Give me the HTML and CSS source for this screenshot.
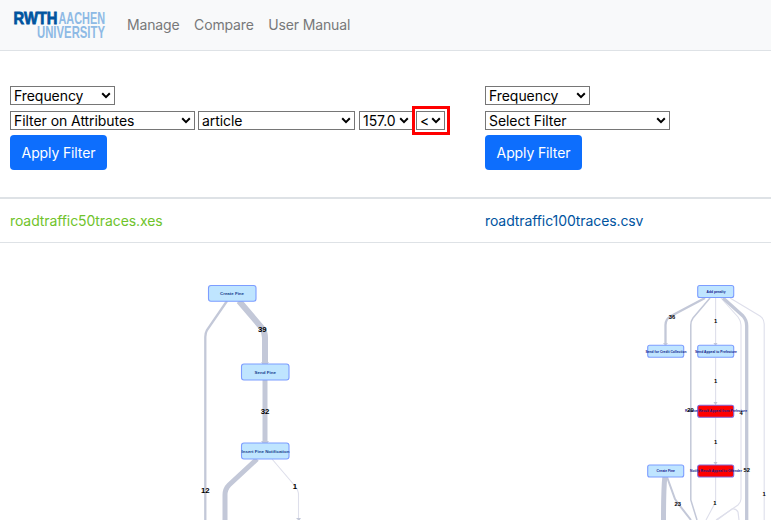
FILE: index.html
```html
<!DOCTYPE html>
<html lang="en">
<head>
<meta charset="utf-8">
<title>Compare</title>
<link rel="stylesheet" href="styles.css">
</head>
<body>
<nav class="navbar">
  <svg class="logo" width="101" height="36" viewBox="-4 -4 101 36" role="img" aria-label="RWTH Aachen University">
    <text class="logo-main" x="0.500" y="12" textLength="44" lengthAdjust="spacingAndGlyphs">RWTH</text>
    <text class="logo-sub" x="45.500" y="12" textLength="46.500" lengthAdjust="spacingAndGlyphs">AACHEN</text>
    <text class="logo-sub" x="24" y="26" textLength="68" lengthAdjust="spacingAndGlyphs">UNIVERSITY</text>
  </svg>
  <a class="nav-link">Manage</a>
  <a class="nav-link">Compare</a>
  <a class="nav-link">User Manual</a>
</nav>
<main class="board">
  <section class="cell filters">
    <div class="row"><span class="select w-frequency"><select><option>Frequency</option></select><svg viewBox="0 0 10 7"><path d="M1.2 1.3 5 5.1 8.8 1.3"/></svg></span></div>
    <div class="row">
      <span class="select w-filter"><select><option>Filter on Attributes</option></select><svg viewBox="0 0 10 7"><path d="M1.2 1.3 5 5.1 8.8 1.3"/></svg></span>
      <span class="select w-attribute"><select><option>article</option></select><svg viewBox="0 0 10 7"><path d="M1.2 1.3 5 5.1 8.8 1.3"/></svg></span>
      <span class="select w-value"><select><option>157.0</option></select><svg viewBox="0 0 10 7"><path d="M1.2 1.3 5 5.1 8.8 1.3"/></svg></span>
      <span class="select w-operator marked"><select><option>&lt;</option></select><svg viewBox="0 0 10 7"><path d="M1.2 1.3 5 5.1 8.8 1.3"/></svg></span>
    </div>
    <button class="apply">Apply Filter</button>
  </section>
  <section class="cell filters">
    <div class="row"><span class="select w-frequency"><select><option>Frequency</option></select><svg viewBox="0 0 10 7"><path d="M1.2 1.3 5 5.1 8.8 1.3"/></svg></span></div>
    <div class="row"><span class="select w-filter"><select><option>Select Filter</option></select><svg viewBox="0 0 10 7"><path d="M1.2 1.3 5 5.1 8.8 1.3"/></svg></span></div>
    <button class="apply">Apply Filter</button>
  </section>
  <div class="cell file file-first">roadtraffic50traces.xes</div>
  <div class="cell file file-second">roadtraffic100traces.csv</div>
  <svg class="graph" width="475" height="277" viewBox="0 243 475 277">
    <g class="edges">
      <path stroke-width="2.3" d="M227 301 207 330Q205.300 333 205.300 337V520"/>
      <path stroke-width="6" d="M239 301 262 328Q265 332 265 338V364"/>
      <path stroke-width="5" d="M265 380V444"/>
      <path stroke-width="5" d="M257 459 229 485Q225 489 225 495V520"/>
      <path class="light" stroke-width="1.1" d="M272 459 295 486Q298.500 490 298.500 495V520"/>
    </g>
    <path class="tip" d="M261 362h8l-4 5zM261 441h8l-4 5zM296 518h5l-2 3z"/>
    <g class="nodes">
      <rect x="208.500" y="285.500" width="47.500" height="15.800" rx="2.500"/>
      <rect x="241.500" y="364" width="47.500" height="16" rx="2.500"/>
      <rect x="241.500" y="443" width="47.500" height="16" rx="2.500"/>
    </g>
    <g class="names">
      <text x="220" y="295.400" textLength="24" lengthAdjust="spacingAndGlyphs">Create Fine</text>
      <text x="254.500" y="373.900" textLength="21.500" lengthAdjust="spacingAndGlyphs">Send Fine</text>
      <text x="241.500" y="452.900" textLength="48" lengthAdjust="spacingAndGlyphs">Insert Fine Notification</text>
    </g>
    <g class="counts">
      <text x="262.300" y="331.800">39</text>
      <text x="265" y="413.600">32</text>
      <text x="205.300" y="493">12</text>
      <text x="295" y="489.300">1</text>
    </g>
  </svg>
  <svg class="graph" width="296" height="277" viewBox="475 243 296 277">
    <g class="edges">
      <path stroke-width="2.300" d="M705 298 671 316Q665.500 319 665.500 325V344"/>
      <path stroke-width="1.500" d="M710 298 693 318Q690.800 321 690.800 325V500L697 520"/>
      <path class="light" stroke-width="1.100" d="M715.600 298V345M715.600 358V405M715.600 417V465M715.600 477V502L706 520"/>
      <path class="light" stroke-width="1.100" d="M721 298 738 317Q741 321 741 325V499Q741 502 738 505L716 520"/>
      <path stroke-width="3.300" d="M723 298 743 316Q746.700 320 746.700 326V520"/>
      <path class="light" stroke-width="1.100" d="M730 298 760 316Q764.200 319 764.200 324V520"/>
      <path stroke-width="5" d="M664.800 477Q663.500 490 663.500 520"/>
      <path stroke-width="2" d="M667 477 675 499Q679 505 691 520"/>
      <path class="light" stroke-width="1.200" d="M717 520 732 509Q736 508 738 512L739 520"/>
    </g>
    <path class="tip" d="M663 343h5l-2.500 3zM713.500 343h4l-2 3zM713.500 402h4l-2 3zM713.500 462h4l-2 3z"/>
    <g class="nodes small">
      <rect x="697.700" y="285.500" width="36" height="12" rx="2"/>
      <rect x="647.700" y="345.300" width="36" height="12" rx="2"/>
      <rect x="697.700" y="345.300" width="36" height="12" rx="2"/>
      <rect class="alert" x="697.700" y="405.200" width="36" height="12" rx="2"/>
      <rect x="647.700" y="465" width="36" height="12" rx="2"/>
      <rect class="alert" x="697.700" y="465" width="36" height="12" rx="2"/>
    </g>
    <g class="names small">
      <text x="706.500" y="292.700" textLength="19" lengthAdjust="spacingAndGlyphs">Add penalty</text>
      <text x="645.500" y="352.700" textLength="41" lengthAdjust="spacingAndGlyphs">Send for Credit Collection</text>
      <text x="695" y="352.700" textLength="42" lengthAdjust="spacingAndGlyphs">Send Appeal to Prefecture</text>
      <text x="685" y="412.200" textLength="62" lengthAdjust="spacingAndGlyphs">Receive Result Appeal from Prefecture</text>
      <text x="656.500" y="472.300" textLength="18.500" lengthAdjust="spacingAndGlyphs">Create Fine</text>
      <text x="690" y="472.300" textLength="52" lengthAdjust="spacingAndGlyphs">Notify Result Appeal to Offender</text>
    </g>
    <g class="counts small">
      <text x="672" y="319.300">36</text>
      <text x="715.600" y="322.900">1</text>
      <text x="715.600" y="383">1</text>
      <text x="690.500" y="411.800">20</text>
      <text x="741" y="414.600">4</text>
      <text x="715.600" y="443.500">1</text>
      <text x="746.700" y="471.500">52</text>
      <text x="677.700" y="505.800">23</text>
      <text x="714.800" y="504.900">1</text>
      <text x="764" y="495.500">1</text>
    </g>
  </svg>
</main>
</body>
</html>
```
FILE: styles.css
```css
* { box-sizing: border-box; }
body {
  margin: 0;
  overflow: hidden;
  background: #fff;
  color: #000;
  font: 14px/20px Inter, "Liberation Sans", sans-serif;
}
.navbar {
  display: flex;
  align-items: center;
  height: 51px;
  padding-left: 9px;
  background: #f8f9fa;
  border-bottom: 1px solid #dee2e6;
}
.logo { margin: 2px 17px 0 0; }
.logo text { font: bold 17px "Liberation Sans", sans-serif; }
.logo .logo-main { fill: #00549f; stroke: #00549f; stroke-width: .8px; }
.logo .logo-sub { fill: #8ebae5; }
.nav-link { margin-right: 14.6px; color: #777879; letter-spacing: -.15px; }
.board {
  display: grid;
  grid-template-columns: 475px 296px;
  grid-template-rows: 148px 44px 277px;
}
.cell { padding-left: 10px; }
.filters { padding-top: 35px; border-bottom: 2px solid #dee2e6; }
.row { display: flex; height: 19px; margin-bottom: 6px; }
.select { position: relative; height: 19px; }
.select select {
  appearance: none;
  display: block;
  width: 100%;
  height: 19px;
  margin: 0;
  padding: 0 0 0 3px;
  border: 1px solid #767676;
  border-radius: 0;
  background: #fff;
  color: #000;
  font: 14px/17px Inter, "Liberation Sans", sans-serif;
  letter-spacing: -.06px;
}
.select svg {
  position: absolute;
  right: 4px;
  top: 6px;
  width: 10px;
  height: 7px;
  fill: none;
  stroke: #000;
  stroke-width: 2;
}
.w-frequency { width: 105px; }
.w-filter { width: 185px; margin-right: 3px; }
.w-attribute { width: 157px; margin-right: 4px; }
.w-value { width: 54px; margin-right: 3px; }
.w-operator { width: 29px; }
.marked::after {
  content: "";
  position: absolute;
  inset: -5px -5px -5px -4px;
  border: 3px solid #f00;
}
.apply {
  display: block;
  width: 97px;
  height: 35px;
  margin-top: -1px;
  padding: 0;
  border: 0;
  border-radius: 4px;
  background: #0d6efd;
  color: #fff;
  font: 14px/20px Inter, "Liberation Sans", sans-serif;
  letter-spacing: -.12px;
}
.file { padding-top: 12px; border-bottom: 1px solid #dee2e6; letter-spacing: -.1px; }
.file-first { color: #6fc32b; }
.file-second { color: #00549f; }
.graph { display: block; }
.edges path { fill: none; stroke: #c3c8d8; }
.edges .light { stroke: #dedfeb; }
.tip { fill: #c3c8d8; }
.nodes rect { fill: #bfe5ff; stroke: #7d9dff; stroke-width: 1.1px; }
.nodes .alert { fill: #f00; stroke: #8066d8; }
.names text { fill: #173f8d; font: bold 4.400px "Liberation Sans", sans-serif; }
.names.small text { fill: #10208c; font-size: 3.400px; }
.counts text { fill: #000; font: bold 7.800px "Liberation Sans", sans-serif; text-anchor: middle; }
.counts.small text { font-size: 5.800px; }
```
